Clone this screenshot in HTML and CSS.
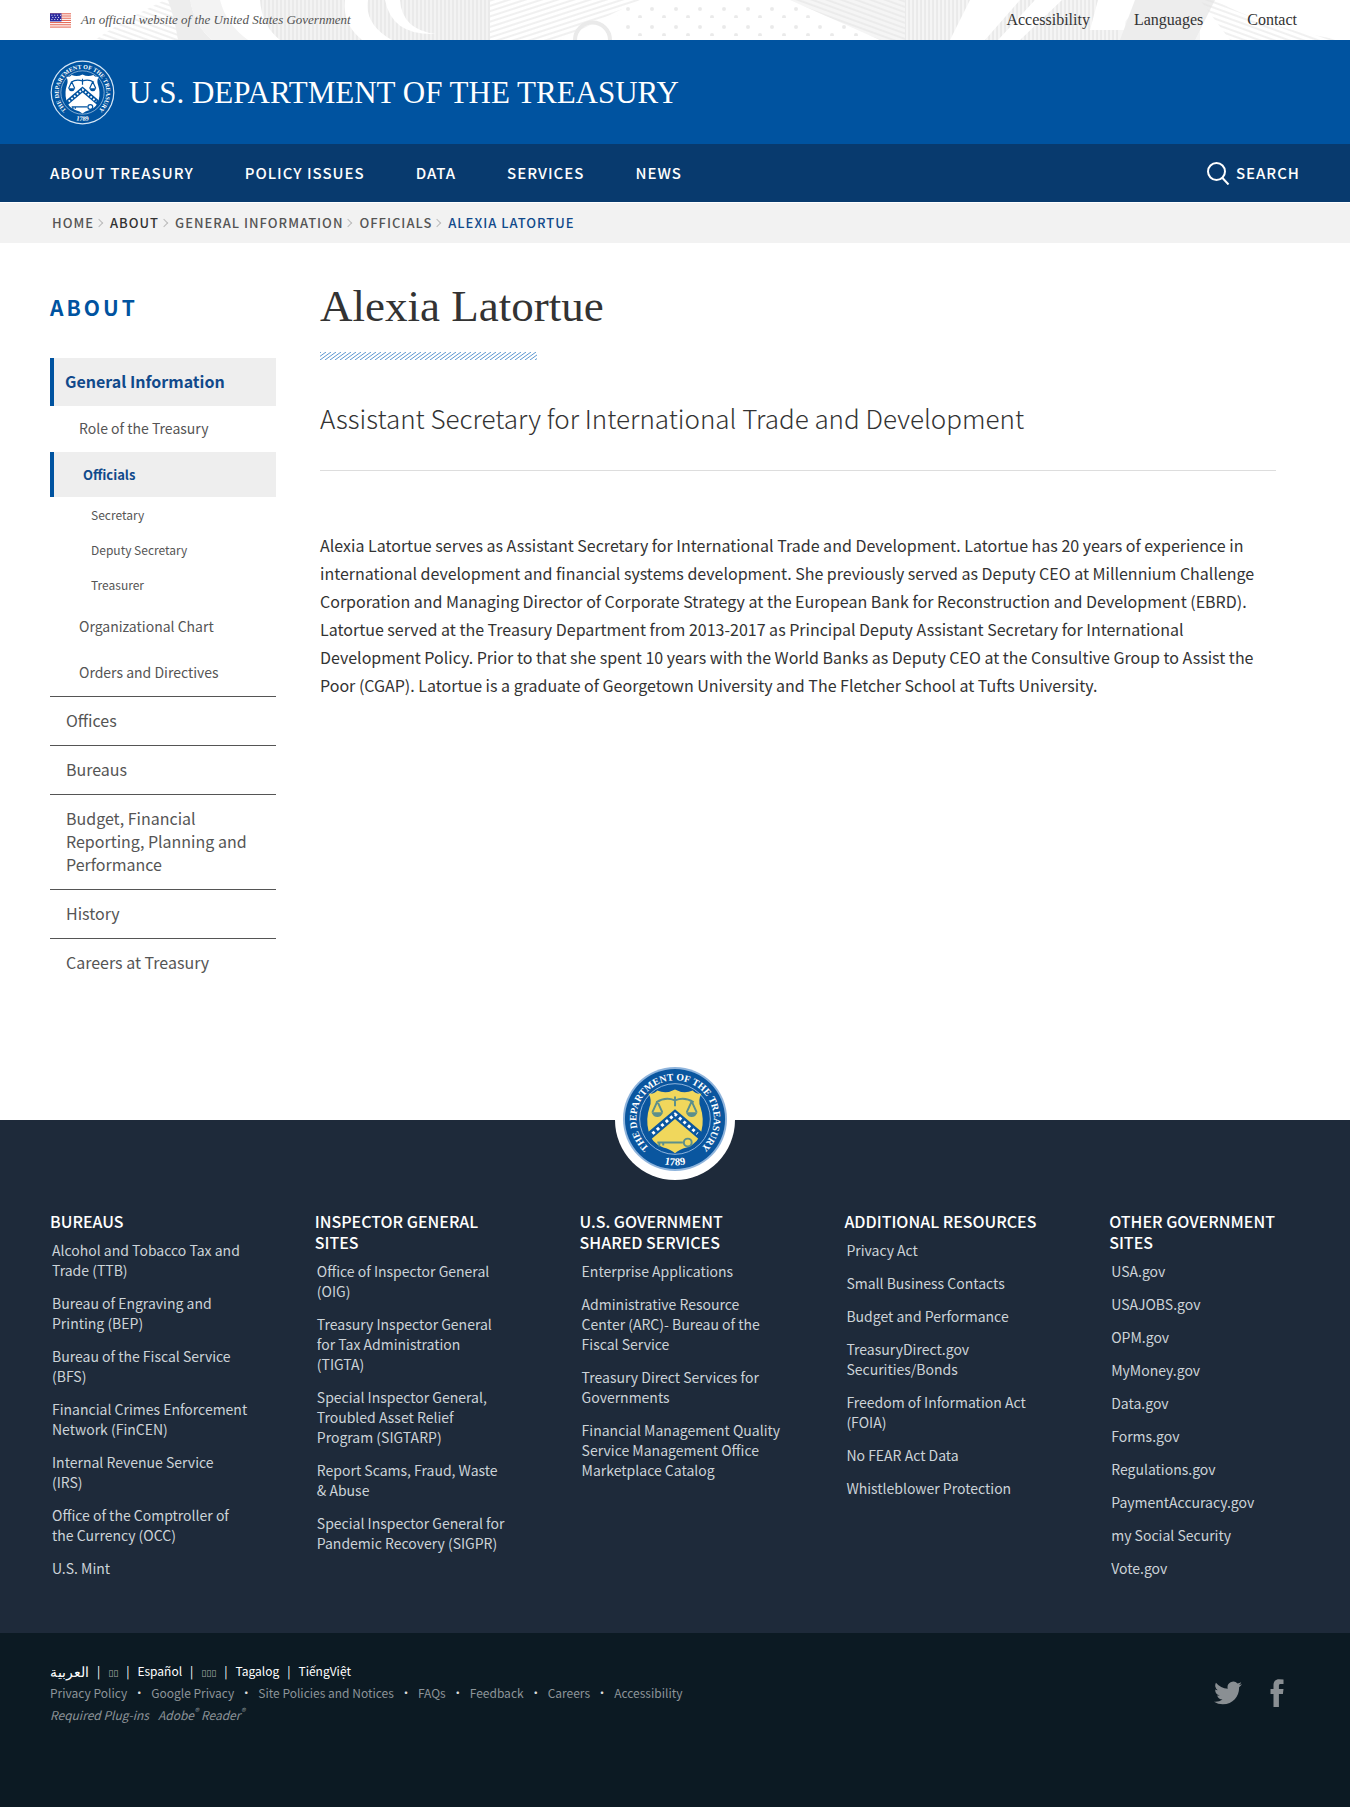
FILE: index.html
```html
<!DOCTYPE html>
<html lang="en">
<head>
<meta charset="utf-8">
<meta name="viewport" content="width=device-width, initial-scale=1">
<title>Alexia Latortue | U.S. Department of the Treasury</title>
<link rel="stylesheet" href="styles.css">
</head>
<body>

<div class="topbar">
  <svg class="engraving" viewBox="0 0 1350 40" preserveAspectRatio="xMidYMid slice" aria-hidden="true">
    <defs>
      <pattern id="rule-v" width="4" height="4" patternUnits="userSpaceOnUse"><path d="M1 0V4" stroke="#dadada"/></pattern>
      <pattern id="rule-d" width="5" height="5" patternUnits="userSpaceOnUse" patternTransform="rotate(-18)"><path d="M0 2H5" stroke="#dcdcdc"/></pattern>
      <pattern id="rule-e" width="5" height="5" patternUnits="userSpaceOnUse" patternTransform="rotate(20)"><path d="M0 2H5" stroke="#dcdcdc"/></pattern>
      <pattern id="stipple" width="24" height="18" patternUnits="userSpaceOnUse"><circle cx="4" cy="9" r="2" fill="#e6e6e6"/><circle cx="16" cy="17" r="2" fill="#e6e6e6"/></pattern>
    </defs>
    <path d="M165 0H200Q190 22 192 40H95Q120 22 165 0z" fill="url(#rule-e)"/>
    <path d="M168 0H190Q195 26 212 40H178Q174 16 168 0z" fill="#e9e9e9"/>
    <path d="M190 0H490V40H212Q195 26 190 0z" fill="#f1f1f1"/>
    <path d="M240 0H490V40H250Q240 20 240 0z" fill="url(#rule-v)"/>
    <path d="M220 0H260Q262 26 280 40H248Q226 24 220 0zM345 0H368Q364 24 392 40H362Q342 24 345 0zM385 0H400Q402 30 436 34Q392 36 385 0z" fill="#fff"/>
    <path d="M490 0H640L560 40H490z" fill="url(#rule-d)"/>
    <path d="M575 40A16 16 0 0 1 610 40" fill="none" stroke="#e5e5e5" stroke-width="4"/>
    <path d="M610 0H830L890 34V40H630z" fill="url(#stipple)"/>
    <path d="M790 0H905V40H880z" fill="#f3f3f3"/>
    <path d="M790 0H905V40H880z" fill="url(#rule-e)"/>
    <path d="M905 0H1200V40H905z" fill="#f3f3f3"/>
    <path d="M905 0H1120V40H905z" fill="url(#rule-v)"/>
    <path d="M970 0H1020L985 40H950zM1035 0H1062L1020 40H998zM1098 0H1135V14Q1120 20 1128 30H1090z" fill="#fff"/>
    <path d="M1135 0H1215L1195 40H1120z" fill="#e9e9e9"/>
    <path d="M1200 0L1230 40H1340Q1260 26 1215 0z" fill="url(#rule-e)"/>
  </svg>
  <div class="topbar-inner">
    <div class="gov-banner">
      <svg class="flag" viewBox="0 0 22 15" aria-hidden="true">
        <path fill="#fff" d="M0 0h22v15H0z"/>
        <path stroke="#e2553f" stroke-width="1" d="M0 .5h22M0 2.800h22M0 5.100h22M0 7.400h22M0 9.700h22M0 12h22M0 14.400h22"/>
        <path fill="#2a2aa0" d="M0 0h12v8.500H0z"/>
        <path stroke="#fff" stroke-dasharray="1 2" d="M1.500 2h10M2.500 4.300h9M1.500 6.500h10"/>
      </svg>
      <span>An official website of the United States Government</span>
    </div>
    <nav class="utility" aria-label="Utility">
      <a href="#">Accessibility</a>
      <a href="#">Languages</a>
      <a href="#">Contact</a>
    </nav>
  </div>
</div>

<header class="masthead">
  <a class="brand" href="#">
    <svg class="brand-seal seal-mono" viewBox="-54 -54 108 108" aria-hidden="true">
      <circle r="53" class="seal-rim"/>
      <circle r="51" class="seal-field"/>
      <circle r="36" class="seal-ring"/>
      <path id="mono-arc" d="M-25 30.600A39.500 39.500 0 1 1 25 30.600" fill="none"/>
      <path id="mono-base" d="M-30 36.500A47 47 0 0 0 30 36.500" fill="none"/>
      <text class="seal-text"><textPath href="#mono-arc" startOffset="50%" text-anchor="middle">THE DEPARTMENT OF THE TREASURY</textPath></text>
      <text class="seal-text seal-year"><textPath href="#mono-base" startOffset="50%" text-anchor="middle">1789</textPath></text>
      <path class="seal-shield" d="M-27-26q6 1 9-3q9 4 18-1q9 5 18 1q3 4 9 3q-4 7-1 14q4 12 1 24q-3 13-15 17q-8 2-12 6q-4-4-12-6q-12-4-15-17q-3-12 1-24q3-7-1-14z"/>
      <path class="seal-chevron" d="M-27 13L0-10L27 13V23L0 0L-27 23z"/>
      <path class="seal-dots" d="M-23 15L0-5L23 15"/>
      <g class="seal-ink">
        <path d="M-19-17q9-6 19-2q10-4 19 2M0-23v10M-18-18l-5 11M-18-18l5 11M17-18l-5 11M17-18l5 11"/>
        <path class="seal-pans" d="M-24-7h12q-2 5-6 5t-6-5zM11-7h12q-2 5-6 5t-6-5z"/>
        <path d="M-18 24h26M-16 24v4M-12 24v3"/>
        <circle cx="13" cy="24" r="4"/>
      </g>
    </svg>
    <span>U.S. DEPARTMENT OF THE TREASURY</span>
  </a>
</header>

<nav class="mainnav" aria-label="Main">
  <ul>
    <li><a href="#">ABOUT TREASURY</a></li>
    <li><a href="#">POLICY ISSUES</a></li>
    <li><a href="#">DATA</a></li>
    <li><a href="#">SERVICES</a></li>
    <li><a href="#">NEWS</a></li>
  </ul>
  <button class="search" type="button">
    <svg viewBox="0 0 24 24" aria-hidden="true"><circle cx="10.500" cy="10.500" r="8.500"/><path d="M16.500 17L22.500 23.500"/></svg>
    SEARCH
  </button>
</nav>

<nav class="crumbs" aria-label="Breadcrumb">
  <ol>
    <li><a href="#">HOME</a></li>
    <li><a class="strong" href="#">ABOUT</a></li>
    <li><a href="#">GENERAL INFORMATION</a></li>
    <li><a href="#">OFFICIALS</a></li>
    <li aria-current="page">ALEXIA LATORTUE</li>
  </ol>
</nav>

<div class="page">
  <aside class="sidebar">
    <h2>ABOUT</h2>
    <ul class="side-menu">
      <li class="open">
        <a class="active" href="#">General Information</a>
        <ul>
          <li><a href="#">Role of the Treasury</a></li>
          <li>
            <a class="active" href="#">Officials</a>
            <ul>
              <li><a href="#">Secretary</a></li>
              <li><a href="#">Deputy Secretary</a></li>
              <li><a href="#">Treasurer</a></li>
            </ul>
          </li>
          <li><a href="#">Organizational Chart</a></li>
          <li><a href="#">Orders and Directives</a></li>
        </ul>
      </li>
      <li><a href="#">Offices</a></li>
      <li><a href="#">Bureaus</a></li>
      <li><a href="#">Budget, Financial Reporting, Planning and Performance</a></li>
      <li><a href="#">History</a></li>
      <li><a href="#">Careers at Treasury</a></li>
    </ul>
  </aside>
  <main class="content">
    <h1>Alexia Latortue</h1>
    <svg class="stripes" aria-hidden="true">
      <defs><pattern id="hatch" width="5" height="8" patternUnits="userSpaceOnUse"><path d="M-10 8L1 0M-5 8L6 0M0 8L11 0" stroke="#5b96cf" stroke-width="1"/></pattern></defs>
      <rect width="100%" height="100%" fill="url(#hatch)"/>
    </svg>
    <p class="role">Assistant Secretary for International Trade and Development</p>
    <p class="bio">Alexia Latortue serves as Assistant Secretary for International Trade and Development. Latortue has 20 years of experience in international development and financial systems development. She previously served as Deputy CEO at Millennium Challenge Corporation and Managing Director of Corporate Strategy at the European Bank for Reconstruction and Development (EBRD). Latortue served at the Treasury Department from 2013-2017 as Principal Deputy Assistant Secretary for International Development Policy. Prior to that she spent 10 years with the World Banks as Deputy CEO at the Consultive Group to Assist the Poor (CGAP). Latortue is a graduate of Georgetown University and The Fletcher School at Tufts University.</p>
  </main>
</div>

<footer class="footer">
  <div class="footer-main">
    <div class="footer-badge">
      <svg class="seal-color" viewBox="-54 -54 108 108" aria-hidden="true">
        <circle r="53" class="seal-rim"/>
        <circle r="51" class="seal-field"/>
        <circle r="36" class="seal-ring"/>
        <path id="color-arc" d="M-25 30.600A39.500 39.500 0 1 1 25 30.600" fill="none"/>
        <path id="color-base" d="M-30 36.500A47 47 0 0 0 30 36.500" fill="none"/>
        <text class="seal-text"><textPath href="#color-arc" startOffset="50%" text-anchor="middle">THE DEPARTMENT OF THE TREASURY</textPath></text>
        <text class="seal-text seal-year"><textPath href="#color-base" startOffset="50%" text-anchor="middle">1789</textPath></text>
        <path class="seal-shield" d="M-27-26q6 1 9-3q9 4 18-1q9 5 18 1q3 4 9 3q-4 7-1 14q4 12 1 24q-3 13-15 17q-8 2-12 6q-4-4-12-6q-12-4-15-17q-3-12 1-24q3-7-1-14z"/>
        <path class="seal-chevron" d="M-27 13L0-10L27 13V23L0 0L-27 23z"/>
        <path class="seal-dots" d="M-23 15L0-5L23 15"/>
        <g class="seal-ink">
          <path d="M-19-17q9-6 19-2q10-4 19 2M0-23v10M-18-18l-5 11M-18-18l5 11M17-18l-5 11M17-18l5 11"/>
          <path class="seal-pans" d="M-24-7h12q-2 5-6 5t-6-5zM11-7h12q-2 5-6 5t-6-5z"/>
          <path d="M-18 24h26M-16 24v4M-12 24v3"/>
          <circle cx="13" cy="24" r="4"/>
        </g>
      </svg>
    </div>
    <div class="footer-cols">
      <section>
        <h3>BUREAUS</h3>
        <ul>
          <li><a href="#">Alcohol and Tobacco Tax and<br>Trade (TTB)</a></li>
          <li><a href="#">Bureau of Engraving and<br>Printing (BEP)</a></li>
          <li><a href="#">Bureau of the Fiscal Service<br>(BFS)</a></li>
          <li><a href="#">Financial Crimes Enforcement<br>Network (FinCEN)</a></li>
          <li><a href="#">Internal Revenue Service<br>(IRS)</a></li>
          <li><a href="#">Office of the Comptroller of<br>the Currency (OCC)</a></li>
          <li><a href="#">U.S. Mint</a></li>
        </ul>
      </section>
      <section>
        <h3>INSPECTOR GENERAL<br>SITES</h3>
        <ul>
          <li><a href="#">Office of Inspector General<br>(OIG)</a></li>
          <li><a href="#">Treasury Inspector General<br>for Tax Administration<br>(TIGTA)</a></li>
          <li><a href="#">Special Inspector General,<br>Troubled Asset Relief<br>Program (SIGTARP)</a></li>
          <li><a href="#">Report Scams, Fraud, Waste<br>&amp; Abuse</a></li>
          <li><a href="#">Special Inspector General for<br>Pandemic Recovery (SIGPR)</a></li>
        </ul>
      </section>
      <section>
        <h3>U.S. GOVERNMENT<br>SHARED SERVICES</h3>
        <ul>
          <li><a href="#">Enterprise Applications</a></li>
          <li><a href="#">Administrative Resource<br>Center (ARC)- Bureau of the<br>Fiscal Service</a></li>
          <li><a href="#">Treasury Direct Services for<br>Governments</a></li>
          <li><a href="#">Financial Management Quality<br>Service Management Office<br>Marketplace Catalog</a></li>
        </ul>
      </section>
      <section>
        <h3>ADDITIONAL RESOURCES</h3>
        <ul>
          <li><a href="#">Privacy Act</a></li>
          <li><a href="#">Small Business Contacts</a></li>
          <li><a href="#">Budget and Performance</a></li>
          <li><a href="#">TreasuryDirect.gov<br>Securities/Bonds</a></li>
          <li><a href="#">Freedom of Information Act<br>(FOIA)</a></li>
          <li><a href="#">No FEAR Act Data</a></li>
          <li><a href="#">Whistleblower Protection</a></li>
        </ul>
      </section>
      <section>
        <h3>OTHER GOVERNMENT<br>SITES</h3>
        <ul>
          <li><a href="#">USA.gov</a></li>
          <li><a href="#">USAJOBS.gov</a></li>
          <li><a href="#">OPM.gov</a></li>
          <li><a href="#">MyMoney.gov</a></li>
          <li><a href="#">Data.gov</a></li>
          <li><a href="#">Forms.gov</a></li>
          <li><a href="#">Regulations.gov</a></li>
          <li><a href="#">PaymentAccuracy.gov</a></li>
          <li><a href="#">my Social Security</a></li>
          <li><a href="#">Vote.gov</a></li>
        </ul>
      </section>
    </div>
  </div>
  <div class="footer-base">
    <div class="legal">
      <ul class="languages">
        <li><a class="arabic" href="#" lang="ar">العربية</a></li>
        <li><a class="glyph-box" href="#">▯▯</a></li>
        <li><a href="#" lang="es">Español</a></li>
        <li><a class="glyph-box" href="#">▯▯▯</a></li>
        <li><a href="#" lang="tl">Tagalog</a></li>
        <li><a href="#" lang="vi">TiếngViệt</a></li>
      </ul>
      <ul class="policies">
        <li><a href="#">Privacy Policy</a></li>
        <li><a href="#">Google Privacy</a></li>
        <li><a href="#">Site Policies and Notices</a></li>
        <li><a href="#">FAQs</a></li>
        <li><a href="#">Feedback</a></li>
        <li><a href="#">Careers</a></li>
        <li><a href="#">Accessibility</a></li>
      </ul>
      <p class="plugins"><span>Required Plug-ins</span><a href="#">Adobe<sup>®</sup> Reader<sup>®</sup></a></p>
    </div>
    <div class="social">
      <a href="#" aria-label="Twitter"><svg class="twitter" viewBox="0 2 24 20" aria-hidden="true"><path d="M24 4.600a10 10 0 0 1-2.800.8 5 5 0 0 0 2.100-2.700 10 10 0 0 1-3.100 1.200 4.900 4.900 0 0 0-8.400 4.500A14 14 0 0 1 1.700 3.200a4.900 4.900 0 0 0 1.500 6.500 5 5 0 0 1-2.200-.6v.1a4.900 4.900 0 0 0 3.900 4.800 5 5 0 0 1-2.200.1 4.900 4.900 0 0 0 4.600 3.400A10 10 0 0 1 0 19.500a14 14 0 0 0 7.500 2.200c9.100 0 14.300-7.700 14-14.600A10 10 0 0 0 24 4.600z"/></svg></a>
      <a href="#" aria-label="Facebook"><svg class="facebook" viewBox="0 0 13 28" aria-hidden="true"><path d="M3 28V15H0v-5h3V6.500C3 2.500 5 .3 8.500.3L13 .4V5h-2.800C8.900 5 8.400 5.600 8.400 7v3H13l-.6 5h-4v13z"/></svg></a>
    </div>
  </div>
</footer>

</body>
</html>
```
FILE: styles.css
```css
:root {
  --sans: "Noto Sans CJK SC", "Noto Sans", sans-serif;
  --serif: "Liberation Serif", serif;
  --gutter: 50px;
}

* { box-sizing: border-box; }

body {
  margin: 0;
  color: #333;
  background: #fff;
  font-family: var(--sans);
  font-size: 16px;
  line-height: 28px;
}

a { color: inherit; text-decoration: none; }
ul, ol { margin: 0; padding: 0; list-style: none; }
h1, h2, h3, p { margin: 0; }
svg { display: block; }

/* Treasury seal */
.seal-rim { fill: var(--seal-line); }
.seal-field { fill: var(--seal-bg); }
.seal-ring { fill: var(--seal-bg); stroke: var(--seal-line); }
.seal-text { fill: #fff; font: 700 10px var(--serif); }
.seal-year { font-size: 11px; }
.seal-shield { fill: var(--seal-shield); }
.seal-chevron { fill: var(--seal-bg); }
.seal-dots { fill: none; stroke: #fff; stroke-width: 3; stroke-dasharray: 3 3; }
.seal-ink { fill: none; stroke: var(--seal-ink); stroke-width: 2; }
.seal-pans { fill: var(--seal-ink); stroke: none; }
.seal-mono { --seal-bg: #0053a0; --seal-line: #d5e6f5; --seal-shield: #fff; --seal-ink: #0053a0; }
.seal-color { --seal-bg: #0a569f; --seal-line: #8fb4dc; --seal-shield: #f0d75c; --seal-ink: #5b8f8c; }

/* Top bar */
.topbar { position: relative; }
.engraving { position: absolute; inset: 0; width: 100%; height: 100%; opacity: .8; }
.topbar-inner {
  position: relative;
  display: flex;
  justify-content: space-between;
  align-items: center;
  height: 40px;
  padding: 0 53px 0 var(--gutter);
  font-family: var(--serif);
}
.gov-banner {
  display: flex;
  align-items: center;
  gap: 10px;
  color: #555;
  font-size: 13px;
  font-style: italic;
}
.flag { width: 21px; height: 15px; }
.utility { display: flex; gap: 44px; font-size: 16px; }

/* Masthead */
.masthead {
  display: flex;
  align-items: center;
  height: 104px;
  padding: 0 var(--gutter);
  background: #0053a0;
}
.brand {
  display: flex;
  align-items: center;
  gap: 14px;
  color: #fff;
  font-family: var(--serif);
  font-size: 31px;
}
.brand span { padding-top: 2px; }
.brand-seal { width: 65px; height: 65px; }

/* Main navigation */
.mainnav {
  display: flex;
  justify-content: space-between;
  align-items: center;
  height: 58px;
  padding: 0 var(--gutter);
  color: #fff;
  background: #083a6e;
  font-size: 15px;
  font-weight: 500;
  letter-spacing: 1px;
}
.mainnav ul { display: flex; gap: 51px; }
.search {
  display: flex;
  align-items: center;
  gap: 6px;
  padding: 0;
  border: 0;
  color: inherit;
  background: none;
  font: inherit;
  letter-spacing: inherit;
}
.search svg { width: 24px; height: 24px; fill: none; stroke: #fff; stroke-width: 2; }

/* Breadcrumb */
.crumbs {
  margin-top: 1px;
  padding: 6px 52px;
  color: #555;
  background: #f2f2f2;
  font-size: 13px;
  font-weight: 500;
  letter-spacing: 1px;
}
.crumbs ol { display: flex; }
.crumbs li { display: flex; align-items: center; }
.crumbs li + li::before {
  content: "";
  width: 5px;
  height: 5px;
  margin: 0 8px 0 2px;
  border: solid #bbb;
  border-width: 1px 1px 0 0;
  transform: rotate(45deg);
}
.crumbs .strong { color: #333; }
.crumbs [aria-current] { color: #114a8b; }

/* Page body */
.page {
  display: grid;
  grid-template-columns: 226px 1fr;
  gap: 44px;
  padding: 38px 74px 133px var(--gutter);
}

.sidebar h2 {
  padding: 11px 0 36px;
  color: #0053a0;
  font-size: 21px;
  letter-spacing: 3px;
  line-height: 30px;
}
.side-menu { color: #555; font-size: 16px; line-height: 23px; }
.side-menu > li > a { display: block; padding: 12px 16px 13px; }
.side-menu > li + li { border-top: 1px solid #555; }
.side-menu a.active {
  border-left: 4px solid #0053a0;
  color: #114a8b;
  background: #eee;
  font-weight: 700;
}
.side-menu > li > a.active { padding: 12px 11px 13px; }
.side-menu ul { font-size: 14px; }
.side-menu ul a { display: block; padding: 11px 29px 12px; }
.side-menu ul a.active { padding: 11px 29px; font-size: 13px; }
.side-menu ul ul { padding-bottom: 2px; font-size: 12px; }
.side-menu ul ul a { padding: 6px 41px; }

.content h1 {
  font-family: var(--serif);
  font-size: 45px;
  font-weight: 400;
  line-height: 50px;
}
.stripes { width: 217px; height: 8px; margin-top: 21px; }
.role {
  padding: 37px 0 31px;
  border-bottom: 1px solid #ddd;
  font-size: 26px;
  font-weight: 300;
  line-height: 42px;
}
.bio { padding-top: 60px; }

/* Footer */
.footer-main {
  position: relative;
  padding: 91px 36px 55px var(--gutter);
  background: #1e2a3a;
}
.footer-badge {
  position: absolute;
  top: 0;
  left: 50%;
  padding: 6px 7px 8px;
  border-radius: 50%;
  background: #fff;
  transform: translate(-50%, -50%);
}
.footer-badge svg { width: 106px; height: 106px; }
.footer-cols { display: grid; grid-template-columns: repeat(5, 1fr); gap: 60px; }
.footer-cols h3 { color: #fff; font-size: 16px; font-weight: 500; line-height: 21px; }
.footer-cols ul {
  display: grid;
  gap: 13px;
  padding: 8px 0 0 2px;
  color: #ccd3d8;
  font-size: 14px;
  line-height: 20px;
}
.footer-base {
  display: flex;
  justify-content: space-between;
  align-items: flex-start;
  padding: 27px 66px 81px var(--gutter);
  color: #8c9499;
  background: #0c1a23;
  font-size: 12px;
  line-height: 22px;
}
.languages, .policies { display: flex; height: 22px; }
.languages { color: #fff; }
.languages li + li::before { content: "|"; margin: 0 8px; }
.arabic { font-size: 14px; }
.glyph-box { color: #aaa; font-family: "DejaVu Sans", sans-serif; font-size: 9px; }
.policies li + li::before { content: "•"; margin: 0 6px; color: #ddd; }
.plugins { display: flex; gap: 9px; font-style: italic; }
.plugins sup { font-size: 9px; line-height: 0; }
.social { display: flex; align-items: center; gap: 28px; padding-top: 19px; fill: #8a8f93; }
.twitter { width: 28px; height: 26px; }
.facebook { width: 14px; height: 28px; }
```
